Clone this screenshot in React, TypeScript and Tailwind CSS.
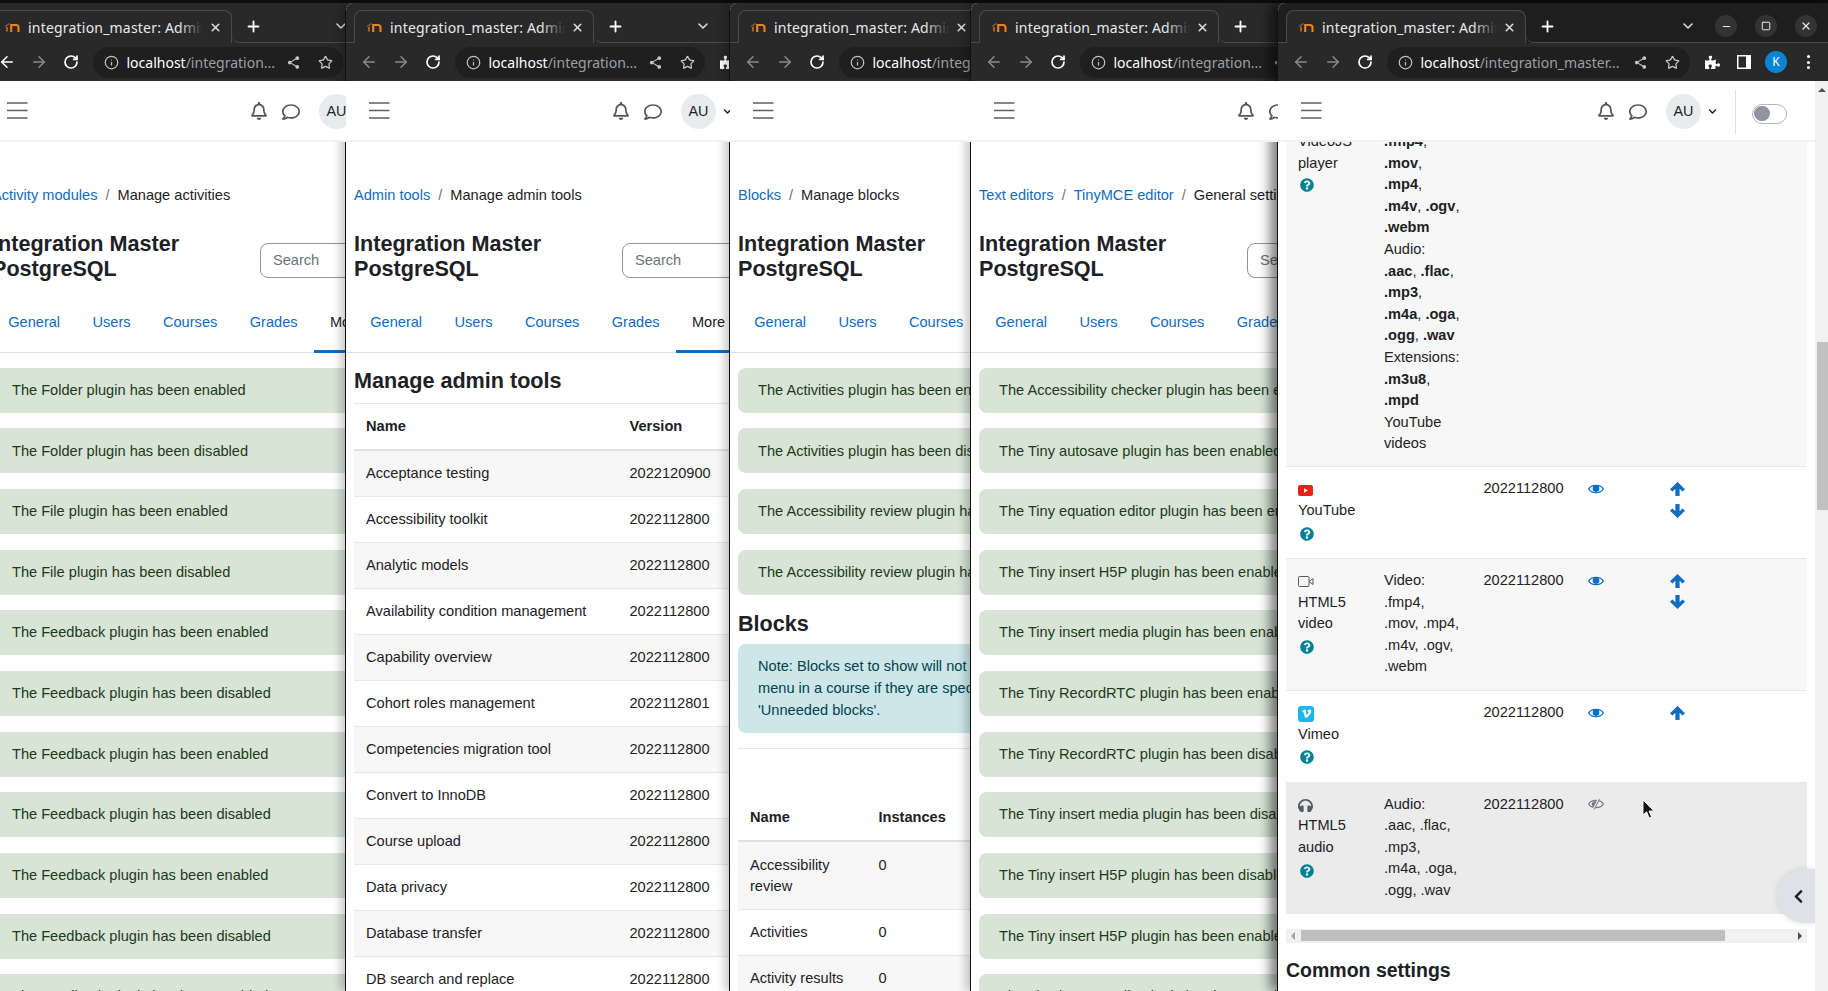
import React from "react";
import { ArrowLeft, ArrowRight, RotateCw, Info, Star, ChevronDown, Plus, X, Minus, Square } from "lucide-react";
import { FaQuestionCircle, FaRegBell, FaRegComment, FaChevronLeft, FaChevronDown, FaPuzzlePiece, FaVimeoV, FaHeadphones } from "react-icons/fa";
import { MdShare } from "react-icons/md";

function Favicon() {
  return (
    <svg width="16" height="10" viewBox="0 0 16 10" className="shrink-0">
      <path d="M1.2 4.5 L5 1.8 L5 2.6" stroke="#8a6a50" strokeWidth="1.2" fill="none" />
      <path d="M3 9.5 V5" stroke="#c9701d" strokeWidth="1.6" fill="none" />
      <path d="M7.2 10 V3 H12 Q14.5 3 14.5 5.5 V10" stroke="#f98012" strokeWidth="2.1" fill="none" />
    </svg>
  );
}

function PanelIcon() {
  return (
    <svg width="14" height="14" viewBox="0 0 14 14">
      <rect x="0" y="0" width="14" height="14" fill="#ffffff" />
      <rect x="1.5" y="1.5" width="7.5" height="11" fill="#292929" />
    </svg>
  );
}

function ArrowUpIcon() {
  return (
    <svg width="15" height="14" viewBox="0 0 15 14" className="text-[#0f6cbf]">
      <path d="M7.5 0 L15 7.2 L12.6 9.6 L9.6 6.7 V14 H5.4 V6.7 L2.4 9.6 L0 7.2 Z" fill="currentColor" />
    </svg>
  );
}

function ArrowDownIcon() {
  return (
    <svg width="15" height="14" viewBox="0 0 15 14" className="text-[#0f6cbf]">
      <path d="M7.5 14 L15 6.8 L12.6 4.4 L9.6 7.3 V0 H5.4 V7.3 L2.4 4.4 L0 6.8 Z" fill="currentColor" />
    </svg>
  );
}

function EyeIcon() {
  return (
    <svg width="16" height="12" viewBox="0 0 16 12" className="text-[#0f6cbf]">
      <path d="M0.7 6 C3.4 1.2 12.6 1.2 15.3 6 C12.6 10.8 3.4 10.8 0.7 6 Z" fill="none" stroke="currentColor" strokeWidth="1.3" />
      <circle cx="8" cy="5.6" r="3.3" fill="currentColor" />
    </svg>
  );
}

function EyeSlashIcon() {
  return (
    <svg width="16" height="12" viewBox="0 0 16 12" className="text-[#737a82]">
      <path d="M0.7 6 C3.4 1.2 12.6 1.2 15.3 6 C12.6 10.8 3.4 10.8 0.7 6 Z" fill="none" stroke="currentColor" strokeWidth="1.3" />
      <path d="M3.6 6 C4.2 3.6 6.6 2.6 9 3 L6 9.6 C4.8 9 3.9 7.6 3.6 6 Z" fill="currentColor" />
      <path d="M10.8 0.6 L5.6 11.4" stroke="#ebebeb" strokeWidth="2" />
      <path d="M11.4 1 L6.2 11.6" stroke="currentColor" strokeWidth="1" />
    </svg>
  );
}

function Chrome({ focused, url, backActive }: { focused?: boolean; url: string; backActive?: boolean }) {
  return (
    <>
      <div className={`flex h-[40px] shrink-0 items-end ${focused ? "bg-[#1e1e1e]" : "bg-[#292929]"}`}>
        <div className="h-[33px] w-2 border-b border-[#4a4a4a]" />
        <div className="relative flex h-[33px] w-[240px] shrink-0 items-center rounded-t-lg border border-b-0 border-[#4a4a4a] bg-[#292929] pl-[11px]">
          <Favicon />
          <div className="ml-2 w-[175px] overflow-hidden whitespace-nowrap font-['Noto_Sans',sans-serif] text-[14px] tracking-[0.2px] text-[#e8eaed]">integration_master: Admin</div>
          <div className="absolute left-[186px] top-0 h-full w-[24px] bg-gradient-to-r from-transparent to-[#292929]" />
          <X size={13} strokeWidth={3} className="absolute left-[215.5px] text-[#dadce0]" />
        </div>
        <div className="flex h-[33px] flex-1 items-center rounded-bl-lg border-b border-[#4a4a4a] pl-[12.5px] pr-[10.7px]">
          <Plus size={17} strokeWidth={2.6} className="text-white" />
          <div className="flex-1" />
          <ChevronDown size={16} strokeWidth={2.4} className="mr-[19.7px] text-[#dadce0]" />
          <div className="flex items-center gap-[18px]">
            <div className="flex h-[22px] w-[22px] items-center justify-center rounded-full bg-[#333333]"><Minus size={11} strokeWidth={2.4} className="text-[#e8eaed]" /></div>
            <div className="flex h-[22px] w-[22px] items-center justify-center rounded-full bg-[#333333]"><Square size={10} strokeWidth={2.4} className="text-[#e8eaed]" /></div>
            <div className="flex h-[22px] w-[22px] items-center justify-center rounded-full bg-[#333333]"><X size={12} strokeWidth={2.4} className="text-[#e8eaed]" /></div>
          </div>
        </div>
      </div>
      <div className="flex h-[38px] shrink-0 items-center bg-[#292929] pl-[6.5px] pr-[4px]">
        <div className="flex h-8 w-8 items-center justify-center"><ArrowLeft size={18} className={backActive ? "text-white" : "text-[#8a8a8a]"} /></div>
        <div className="flex h-8 w-8 items-center justify-center"><ArrowRight size={18} className="text-[#8a8a8a]" /></div>
        <div className="flex h-8 w-8 items-center justify-center"><RotateCw size={16} strokeWidth={2.6} className="text-white" /></div>
        <div className="ml-[6px] flex h-[31px] flex-1 items-center rounded-full bg-[#1f1f1f] pl-[11px] pr-[10px] font-['Noto_Sans',sans-serif] text-[14px]">
          <Info size={15} className="shrink-0 text-[#bdc1c6]" />
          <div className="ml-[8px] overflow-hidden whitespace-nowrap"><span className="text-white">localhost</span><span className="text-[#9aa0a6]">{url}</span></div>
          <div className="flex-1" />
          <MdShare size={15} className="shrink-0 text-[#c9c9c9]" />
          <Star size={15} className="ml-[17px] shrink-0 text-[#c9c9c9]" />
        </div>
        <div className="ml-[6px] flex h-8 w-8 items-center justify-center"><FaPuzzlePiece size={15} className="text-white" /></div>
        <div className="flex h-8 w-8 items-center justify-center"><PanelIcon /></div>
        <div className="flex h-8 w-8 items-center justify-center"><div className="flex h-[22px] w-[22px] items-center justify-center rounded-full bg-[#0b84d6] font-['Noto_Sans',sans-serif] text-[12px] text-white">K</div></div>
        <div className="flex h-8 w-8 flex-col items-center justify-center gap-[2.5px]">
          <div className="h-[3px] w-[3px] rounded-full bg-white" />
          <div className="h-[3px] w-[3px] rounded-full bg-white" />
          <div className="h-[3px] w-[3px] rounded-full bg-white" />
        </div>
      </div>
    </>
  );
}

function Header() {
  return (
    <div className="relative z-10 flex h-[61px] shrink-0 items-center border-b-2 border-[#f1f2f4] bg-white pl-[22.5px] pr-[28px] pt-[2px]">
      <svg width="21" height="17" viewBox="0 0 21 17" className="mb-[2px]">
        <path d="M0 1h20.5M0 8.5h20.5M0 16h20.5" stroke="#5b6268" strokeWidth="1.4" fill="none" />
      </svg>
      <div className="flex-1" />
      <FaRegBell size={18} className="mb-[1px] text-[#4f555a]" />
      <FaRegComment size={18} className="ml-[14px] text-[#4f555a]" />
      <div className="ml-[18.8px] flex h-[35px] w-[35px] items-center justify-center rounded-full bg-[#e9ecef] text-[14.4px] text-[#1d2125]">AU</div>
      <FaChevronDown size={9} className="ml-[7px] text-[#1d2125]" />
      <div className="ml-[18px] h-[44px] w-px self-center bg-[#dee2e6]" />
      <div className="ml-[16px] mt-[4px] flex h-[20px] w-[35px] items-center rounded-full border border-[#adb5bd] bg-white px-[1px]">
        <div className="h-[15.5px] w-[15.5px] rounded-full bg-[#8f959e]" />
      </div>
    </div>
  );
}

function Sep() {
  return <span className="mx-[8px] text-[#6a737b]">/</span>;
}

function Top({ crumbs }: { crumbs: string[] }) {
  return (
    <>
      <div className="mt-[42px] h-[22px] whitespace-nowrap pl-2 leading-[22px] text-[#1d2125]">
        {crumbs.map((c, i) => (
          <React.Fragment key={c}>
            {i > 0 && <Sep />}
            <span className={i < crumbs.length - 1 ? "text-[#0f6cbf]" : ""}>{c}</span>
          </React.Fragment>
        ))}
      </div>
      <div className="mt-[25px] flex h-[51px] items-start pl-2">
        <div className="w-[268px] shrink-0 text-[21.6px] font-bold leading-[25.4px] text-[#1d2125]">Integration Master<br />PostgreSQL</div>
        <div className="mt-[12px] flex h-[35px] w-[200px] shrink-0 items-center rounded-lg border border-[#8f959e] pl-[12px] text-[#6a737b]">Search</div>
      </div>
      <div className="mt-[29px] flex h-[42px] border-b border-[#dee2e6] pl-2 leading-[23px] text-[#0f6cbf]">
        <div className="px-[16.2px]">General</div>
        <div className="px-[16.2px]">Users</div>
        <div className="px-[16.2px]">Courses</div>
        <div className="px-[16.2px]">Grades</div>
        <div className="h-[42px] border-b-[3px] border-[#0f6cbf] px-[16.2px] text-[#1d2125]">More</div>
      </div>
    </>
  );
}

function Alerts({ items }: { items: string[] }) {
  return (
    <div className="mt-[15px] px-2">
      {items.map((t, i) => (
        <div key={i} className="mb-[15.67px] flex h-[45px] items-center whitespace-nowrap rounded-lg bg-[#d7e4d6] pl-5 pt-px text-[#1c3a1a]">{t}</div>
      ))}
    </div>
  );
}

const shell = "absolute top-[3px] bottom-0 flex flex-col overflow-hidden rounded-tl-lg border-l border-[#111111] bg-white font-['Liberation_Sans',sans-serif] text-[14.6px]";

const toolRows: [string, string][] = [
  ["Acceptance testing", "2022120900"],
  ["Accessibility toolkit", "2022112800"],
  ["Analytic models", "2022112800"],
  ["Availability condition management", "2022112800"],
  ["Capability overview", "2022112800"],
  ["Cohort roles management", "2022112801"],
  ["Competencies migration tool", "2022112800"],
  ["Convert to InnoDB", "2022112800"],
  ["Course upload", "2022112800"],
  ["Data privacy", "2022112800"],
  ["Database transfer", "2022112800"],
  ["DB search and replace", "2022112800"],
];

const w1 = [
  "The Folder plugin has been enabled",
  "The Folder plugin has been disabled",
  "The File plugin has been enabled",
  "The File plugin has been disabled",
  "The Feedback plugin has been enabled",
  "The Feedback plugin has been disabled",
  "The Feedback plugin has been enabled",
  "The Feedback plugin has been disabled",
  "The Feedback plugin has been enabled",
  "The Feedback plugin has been disabled",
  "The Feedback plugin has been enabled",
];

const w3 = [
  "The Activities plugin has been enabled",
  "The Activities plugin has been disabled",
  "The Accessibility review plugin has been enabled",
  "The Accessibility review plugin has been disabled",
];

const w4 = [
  "The Accessibility checker plugin has been enabled",
  "The Tiny autosave plugin has been enabled",
  "The Tiny equation editor plugin has been enabled",
  "The Tiny insert H5P plugin has been enabled",
  "The Tiny insert media plugin has been enabled",
  "The Tiny RecordRTC plugin has been enabled",
  "The Tiny RecordRTC plugin has been disabled",
  "The Tiny insert media plugin has been disabled",
  "The Tiny insert H5P plugin has been disabled",
  "The Tiny insert H5P plugin has been enabled",
  "The Tiny insert media plugin has been enabled",
];

function Help({ tall }: { tall?: boolean }) {
  return (
    <div className={`flex items-center pl-[2px] ${tall ? "h-[24.4px]" : "h-[21.6px]"}`}>
      <FaQuestionCircle size={14} className="text-[#008196]" />
    </div>
  );
}

function RowIcon({ children }: { children: React.ReactNode }) {
  return <div className="flex h-[21.6px] items-center pt-[2px]">{children}</div>;
}

function PlayerRow({ icon, name, formats, version, eye = true, up, down, bg }: {
  icon?: React.ReactNode; name: string[]; formats?: React.ReactNode; version?: string; eye?: boolean; up?: boolean; down?: boolean; bg: string;
}) {
  return (
    <div className={`flex border-t border-[#e6e8eb] pt-[11px] pb-[12px] leading-[21.6px] text-[#1d2125] ${bg}`}>
      <div className="w-[98px] shrink-0 pl-[12px]">
        {icon && <RowIcon>{icon}</RowIcon>}
        {name.map((n) => <div key={n}>{n}</div>)}
        <Help tall />
      </div>
      <div className="w-[99.5px] shrink-0 whitespace-nowrap">{formats}</div>
      <div className="w-[104px] shrink-0">{version}</div>
      <div className="flex h-[21.6px] w-[82px] shrink-0 items-center">
        {eye ? <EyeIcon /> : <EyeSlashIcon />}
      </div>
      <div className="w-[16px]">
        {up && <div className="flex h-[21.6px] items-center"><ArrowUpIcon /></div>}
        {down && <div className="flex h-[21.6px] items-center"><ArrowDownIcon /></div>}
      </div>
    </div>
  );
}

export default function App() {
  return (
    <div className="relative h-[991px] w-[1828px] overflow-hidden bg-[#0d0d0d]">
      {/* Window 1 */}
      <div className={`${shell} left-[-17px] w-[498px]`}>
        <Chrome url="/integration..." backActive />
        <div className="mr-[13px] flex min-h-0 flex-1 flex-col"><Header /><Top crumbs={["Activity modules", "Manage activities"]} /><Alerts items={w1} /></div>
      </div>

      {/* Window 2 */}
      <div className={`${shell} left-[345px] w-[498px] shadow-[-5px_0_9px_rgba(0,0,0,0.2)]`}>
        <Chrome url="/integration..." />
        <div className="mr-[13px] flex min-h-0 flex-1 flex-col">
          <Header />
          <Top crumbs={["Admin tools", "Manage admin tools"]} />
          <div className="px-2">
            <div className="mt-[15px] h-[26px] text-[21.6px] font-bold leading-[26px] text-[#1d2125]">Manage admin tools</div>
            <div className="mt-[9.5px] flex h-[48px] items-center border-y border-t-[#e6e8eb] border-b-[#dee2e6] border-b-2 pl-[12px] font-bold text-[#1d2125]">
              <div className="w-[263.5px]">Name</div><div>Version</div>
            </div>
            {toolRows.map(([n, v], i) => (
              <div key={n} className={`flex h-[46px] items-center border-b border-[#e6e8eb] pl-[12px] text-[#1d2125] ${i % 2 === 0 ? "bg-[#f7f7f7]" : ""}`}>
                <div className="w-[263.5px] whitespace-nowrap">{n}</div><div>{v}</div>
              </div>
            ))}
          </div>
        </div>
      </div>

      {/* Window 3 */}
      <div className={`${shell} left-[729px] w-[498px] shadow-[-5px_0_9px_rgba(0,0,0,0.2)]`}>
        <Chrome url="/integration..." />
        <div className="mr-[13px] flex min-h-0 flex-1 flex-col">
          <Header />
          <Top crumbs={["Blocks", "Manage blocks"]} />
          <Alerts items={w3} />
          <div className="px-2">
            <div className="h-[26px] pt-px text-[21.6px] font-bold leading-[26px] text-[#1d2125]">Blocks</div>
            <div className="mt-[8px] whitespace-nowrap rounded-lg bg-[#cce6ea] py-[12px] pl-5 leading-[21.6px] text-[#00434e]">
              Note: Blocks set to show will not appear in the 'Add a block'<br />menu in a course if they are specified as protected, as in<br />'Unneeded blocks'.
            </div>
            <div className="mt-[15px] h-px bg-[#e6e8eb]" />
            <div className="mt-[46px] flex h-[47px] items-center border-b-2 border-[#dee2e6] pl-[12px] font-bold text-[#1d2125]">
              <div className="w-[128.5px]">Name</div><div>Instances</div>
            </div>
            <div className="flex h-[68px] border-b border-[#e6e8eb] bg-[#f7f7f7] pl-[12px] pt-[12.5px] leading-[21.6px] text-[#1d2125]">
              <div className="w-[128.5px] pr-[24px]">Accessibility review</div><div>0</div>
            </div>
            <div className="flex h-[46px] items-center border-b border-[#e6e8eb] pl-[12px] text-[#1d2125]">
              <div className="w-[128.5px]">Activities</div><div>0</div>
            </div>
            <div className="flex h-[46px] items-center border-b border-[#e6e8eb] bg-[#f7f7f7] pl-[12px] text-[#1d2125]">
              <div className="w-[128.5px]">Activity results</div><div>0</div>
            </div>
          </div>
        </div>
      </div>

      {/* Window 4 */}
      <div className={`${shell} left-[970px] w-[498px] shadow-[-5px_0_9px_rgba(0,0,0,0.2)]`}>
        <Chrome url="/integration..." />
        <div className="mr-[13px] flex min-h-0 flex-1 flex-col"><Header /><Top crumbs={["Text editors", "TinyMCE editor", "General settings"]} /><Alerts items={w4} /></div>
      </div>

      {/* Window 5 */}
      <div className={`${shell} left-[1277px] w-[551px] shadow-[-7px_0_12px_rgba(0,0,0,0.5)]`}>
        <Chrome focused url="/integration_master..." />
        <div className="flex min-h-0 flex-1">
          <div className="relative flex min-w-0 flex-1 flex-col overflow-hidden">
            <Header />
            <div className="-mt-[11px] px-2">
              <div className="flex bg-[#f7f7f7] pb-[11.5px] leading-[21.6px] text-[#1d2125]">
                <div className="w-[98px] shrink-0 pl-[12px]">VideoJS<br />player<Help /></div>
                <div className="w-[99.5px] shrink-0 whitespace-nowrap">
                  <b>.fmp4</b>,<br /><b>.mov</b>,<br /><b>.mp4</b>,<br /><b>.m4v</b>, <b>.ogv</b>,<br /><b>.webm</b><br />Audio:<br /><b>.aac</b>, <b>.flac</b>,<br /><b>.mp3</b>,<br /><b>.m4a</b>, <b>.oga</b>,<br /><b>.ogg</b>, <b>.wav</b><br />Extensions:<br /><b>.m3u8</b>,<br /><b>.mpd</b><br />YouTube<br />videos
                </div>
              </div>
              <PlayerRow
                bg="bg-white"
                icon={
                  <svg width="15" height="11" viewBox="0 0 15 11"><rect width="15" height="11" rx="2.5" fill="#e62117" /><path d="M6 3.2 L10 5.5 L6 7.8Z" fill="#fff" /></svg>
                }
                name={["YouTube"]} version="2022112800" up down
              />
              <PlayerRow
                bg="bg-[#f7f7f7]"
                icon={
                  <svg width="16" height="11" viewBox="0 0 16 11"><rect x="0.5" y="0.5" width="10.5" height="10" rx="1" fill="none" stroke="#555b60" /><path d="M11 5.5 L15 2.5 V8.5 Z" fill="none" stroke="#555b60" /></svg>
                }
                name={["HTML5", "video"]}
                formats={<>Video:<br />.fmp4,<br />.mov, .mp4,<br />.m4v, .ogv,<br />.webm</>}
                version="2022112800" up down
              />
              <PlayerRow
                bg="bg-white"
                icon={<div className="flex h-[16px] w-[16px] items-center justify-center rounded-[3px] bg-[#1ab7ea]"><FaVimeoV size={11} className="text-white" /></div>}
                name={["Vimeo"]} version="2022112800" up
              />
              <PlayerRow
                bg="bg-[#ebebeb]"
                icon={<FaHeadphones size={15} className="text-[#555b60]" />}
                name={["HTML5", "audio"]}
                formats={<>Audio:<br />.aac, .flac,<br />.mp3,<br />.m4a, .oga,<br />.ogg, .wav</>}
                version="2022112800" eye={false}
              />
              <div className="mt-[15px] flex h-[14px] items-center bg-[#f1f1f1]">
                <div className="ml-[5px] h-0 w-0 border-y-[4px] border-r-[4px] border-y-transparent border-r-[#a3a3a3]" />
                <div className="ml-[6px] h-[11px] w-[424px] bg-[#bebebe]" />
                <div className="flex-1" />
                <div className="mr-[5px] h-0 w-0 border-y-[4px] border-l-[4px] border-y-transparent border-l-[#505050]" />
              </div>
              <div className="mt-[16px] text-[19.5px] font-bold leading-[23px] text-[#1d2125]">Common settings</div>
            </div>
            <div className="absolute right-0 top-[788px] flex h-[54px] w-[38px] items-center justify-center rounded-l-[27px] bg-[#dee2e6] pl-[5px] shadow-[0_0_6px_rgba(0,0,0,0.12)]">
              <FaChevronLeft size={15} className="text-[#1d2125]" />
            </div>
            <svg width="14" height="21" viewBox="0 0 14 21" className="absolute left-[364px] top-[718px]">
              <path d="M1 1 V16 L4.6 12.8 L7.2 19 L9.6 18 L7 12 H12 Z" fill="#111" stroke="#fff" strokeWidth="0.9" />
            </svg>
          </div>
          <div className="flex w-[13px] shrink-0 flex-col items-center bg-[#f1f1f1]">
            <div className="mt-[7px] h-0 w-0 border-x-[4px] border-b-[4px] border-x-transparent border-b-[#505050]" />
            <div className="ml-[1px] mt-[250px] h-[168px] w-[11px] bg-[#c1c1c1]" />
          </div>
        </div>
      </div>
    </div>
  );
}
